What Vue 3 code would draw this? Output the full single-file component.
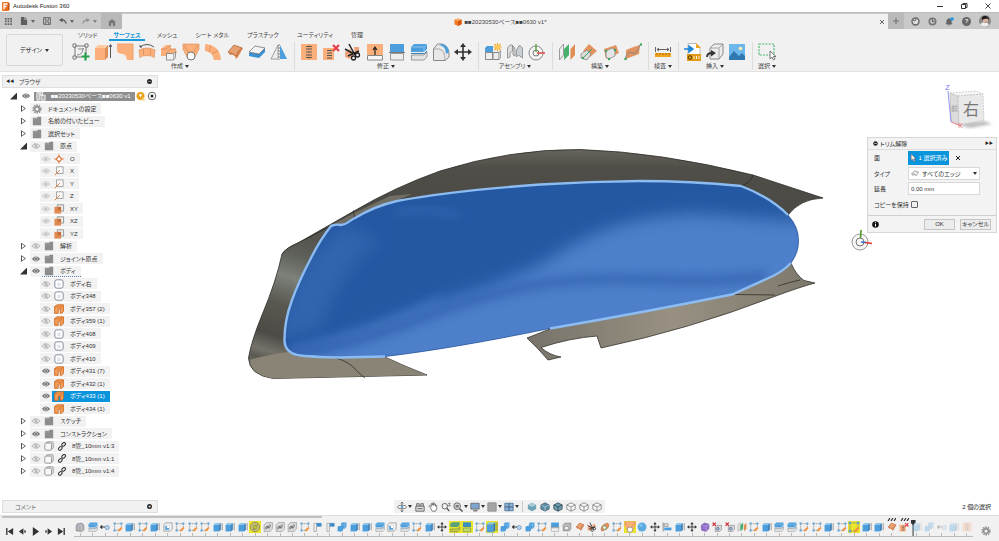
<script setup>
import { ref } from 'vue'

const tabs = ['ソリッド', 'サーフェス', 'メッシュ', 'シート メタル', 'プラスチック', 'ユーティリティ', '管理']
const activeTab = ref('サーフェス')

const groups = [
  { label: '作成', tools: ['sketch-new', 'extrude-o', 'patch-l', 'revolve', 'sweep', 'loft', 'arc', 'patch', 'slab', 'mirror'] },
  { label: '修正', tools: ['stitch', 'unstitch', 'trim', 'extend', 'half', 'split', 'fillet', 'move'] },
  { label: 'アセンブリ', tools: ['component', 'joint', 'origin'] },
  { label: '構築', tools: ['planes', 'plane-angle', 'plane-3pt', 'plane-path'] },
  { label: '検査', tools: ['measure'] },
  { label: '挿入', tools: ['svg-in', 'derive', 'canvas'] },
  { label: '選択', tools: ['select'] },
]

const root = ref(true)
const folder = (name, open, eye) => ({ depth: 1, name, open, eye, icon: 'folder' })
const leaf = (name, icon, eye, extra = {}) => ({ depth: 2, name, icon, eye, ...extra })
const rows = [
  { depth: 1, name: 'ドキュメントの設定', icon: 'gear' },
  folder('名前の付いたビュー'),
  folder('選択セット'),
  folder('原点', true, 'off'),
  leaf('O', 'point', 'dim'),
  leaf('X', 'axis', 'dim'),
  leaf('Y', 'axis', 'dim'),
  leaf('Z', 'axis', 'dim'),
  leaf('XY', 'plane', 'dim'),
  leaf('XZ', 'plane', 'dim'),
  leaf('YZ', 'plane', 'dim'),
  folder('解析', false, 'off'),
  folder('ジョイント原点', false, 'on'),
  { ...folder('ボディ', true, 'on'), dotted: true },
  leaf('ボディ右', 'body', 'off'),
  leaf('ボディ348', 'body', 'off'),
  leaf('ボディ357 (2)', 'surface', 'off'),
  leaf('ボディ359 (1)', 'surface', 'off'),
  leaf('ボディ408', 'body', 'off'),
  leaf('ボディ409', 'body', 'off'),
  leaf('ボディ410', 'body', 'off'),
  leaf('ボディ431 (7)', 'surface', 'on'),
  leaf('ボディ432 (1)', 'surface', 'on'),
  leaf('ボディ433 (1)', 'surface', 'on', { selected: true }),
  leaf('ボディ434 (1)', 'surface', 'on'),
  folder('スケッチ', false, 'off'),
  folder('コンストラクション', false, 'on'),
  { depth: 1, name: '8管_10mm v1:3', icon: 'comp', eye: 'off', link: true },
  { depth: 1, name: '8管_10mm v1:1', icon: 'comp', eye: 'off', link: true },
  { depth: 1, name: '8管_10mm v1:4', icon: 'comp', eye: 'off', link: true },
]

const nav = [
  ['orbit', 1], ['look'], ['hand'], ['zoomer'], ['fit', 1], ['display', 1], ['gridv', 1], ['views', 1],
]
const visual = ['cube-s', 'cube-e', 'cube-h', 'cube-w', 'cube-w', 'cube-w']

/* "!" marks a highlighted feature, "#" one that carries a pattern flag */
const steps = (
  'form split dot sketch extrude sketch extrude shell sketch sketch sketch extrude extrude extrude !ring chain chain chain ' +
  'sketch flag flag combine extrude extrude split shell split sketch extrude move !split-g !half-g sketch !extrude combine dot combine ' +
  'sketch half hollow patch trim disc sketch !loft sphere move align extrude move form-p del del planes sketch extrude split split ' +
  'sketch sketch extrude sketch !sketch extrude extrude #patch #unstitch extrude combine dot extrude stitch'
).split(' ').map((s, i) => ({
  icon: s.replace(/[!#]/, ''),
  hot: s[0] === '!',
  hash: s[0] === '#',
  later: i > 66,
  marker: i === 66,
}))

const extension = ref('0.00 mm')
const edgeType = ref('all')
const keepCopy = ref(false)
</script>

<template>
  <svg class="defs" width="0" height="0" aria-hidden="true">
    <defs>
      <!-- ribbon tools -->
      <symbol id="sketch-new" viewBox="0 0 18 18"><path d="M3 3h11v8M3 3v11h7" fill="none" stroke="#777"/><path d="M5 12Q11 12 11 5M6 6h6" fill="none" stroke="#888"/><g fill="#fff" stroke="#555" stroke-width=".8"><path d="M1 1h3v3H1zM13 1h3v3h-3zM1 13h3v3H1z"/></g><path d="M13.500 9.500v8M9.500 13.500h8" stroke="#22a04a" stroke-width="2.200"/></symbol>
      <symbol id="extrude-o" viewBox="0 0 18 18"><path d="M1 5l3-3h9l-3 3z" fill="#ffc9a0"/><path d="M1 5h10v12H1z" fill="#fbb07c"/><path d="M11 5l3-3v12l-3 3z" fill="#e08e56"/><path d="M16.500 15V2M15 4l1.500-2.500L18 4" fill="none" stroke="#444" stroke-width=".9"/></symbol>
      <symbol id="patch-l" viewBox="0 0 18 18"><path d="M1 1h16v16h-6q-1-6-4-6-5 0-6-3z" fill="#fbb07c"/><path d="M1 1h16v16" fill="none" stroke="#eda26c"/></symbol>
      <symbol id="revolve" viewBox="0 0 18 18"><path d="M1 7Q9 3 17 7l-1 8q-2-3-4-2-3-1-6 0-2-1-4 2z" fill="#fbb07c" stroke="#d98a55" stroke-width=".6"/><path d="M5.500 6v6M12.500 6v6" stroke="#d98a55" stroke-width=".7"/><path d="M2 4Q9-1 16 4M2 2v2h2" fill="none" stroke="#444" stroke-width=".9"/></symbol>
      <symbol id="sweep" viewBox="0 0 18 18"><path d="M1 6l5-4h5v4h5l1 4-10 1-1 2H1z" fill="#fbb07c"/><path d="M1 6h5l5-4M7 10l3-4h6" fill="none" stroke="#d98a55" stroke-width=".8"/><path d="M6.500 10.500h7v6.500h-7z" fill="#f3f3f3" stroke="#777" stroke-width=".8"/><path d="M13.500 10.500l2-2v6l-2 2.500" fill="#ddd" stroke="#777" stroke-width=".7"/></symbol>
      <symbol id="loft" viewBox="0 0 18 18"><path d="M1 1h16v5l-5 10H6L1 6z" fill="#fbb07c" stroke="#d98a55" stroke-width=".6"/><path d="M2 2l5 8M16 2l-5 8" stroke="#d98a55" stroke-width=".8"/><circle cx="9" cy="13" r="4" fill="#fff" stroke="#777"/></symbol>
      <symbol id="arc" viewBox="0 0 18 18"><path d="M1 1Q16 2 17 17h-7Q9 9 1 8z" fill="#fbb07c"/><path d="M7 2.500L5 9M14 7.500l-6 3.500" stroke="#d98a55" stroke-width=".8"/></symbol>
      <symbol id="patch" viewBox="0 0 18 18"><path d="M2 9l6-7 9 3-5 9-2 2Q9 11 4 12z" fill="#d98550"/><path d="M2 9l6-7 8 3q-4 2-6 8-3-3-8-4z" fill="#e9a070" stroke="#a85f30" stroke-width=".6"/></symbol>
      <symbol id="slab" viewBox="0 0 18 18"><path d="M1 10l6-6 10 1v4l-6 6-10-2z" fill="#3a90d0"/><path d="M1 9l6-6 10 2-6 6z" fill="#f4f4f4" stroke="#777" stroke-width=".8"/></symbol>
      <symbol id="mirror" viewBox="0 0 18 18"><path d="M8 2v14H1z" fill="#eee" stroke="#888" stroke-width=".8"/><path d="M10 2v14h7z" fill="#4c9fdc"/><path d="M9 1v16" stroke="#666" stroke-dasharray="2 1" stroke-width=".8"/></symbol>
      <symbol id="stitch" viewBox="0 0 18 18"><path d="M1 1h16v16H1z" fill="#fbb07c"/><path d="M9 1v16" stroke="#e09460"/><path d="M6 3.500h6M6 6h6M6 9h6M6 12h6M6 14.500h6" stroke="#555"/></symbol>
      <symbol id="unstitch" viewBox="0 0 18 18"><path d="M1 5h11v12H1z" fill="#fbb07c"/><path d="M5 7.500h5M5 10h5M5 12.500h5M5 15h5" stroke="#555"/><path d="M11 2l6 6M17 2l-6 6" stroke="#e8404c" stroke-width="2.200"/></symbol>
      <symbol id="trim" viewBox="0 0 18 18"><path d="M1 9l5-3 4 5-4 5-5-2zM10 4h5v6l-4 2z" fill="#eda27a"/><path d="M5 1l6 11M15 8L4 13M1 6l9 5" stroke="#222" stroke-width="1.500"/><circle cx="13.500" cy="12" r="2" fill="none" stroke="#222" stroke-width="1.300"/><circle cx="9.500" cy="15" r="2" fill="none" stroke="#222" stroke-width="1.300"/></symbol>
      <symbol id="extend" viewBox="0 0 18 18"><path d="M1 1h16v11H1z" fill="#fbb07c"/><path d="M1.500 12.500h15V17h-15z" fill="#f6f6f6" stroke="#888"/><path d="M9 12V5M7 7l2-3 2 3" fill="none" stroke="#222" stroke-width="1.200"/></symbol>
      <symbol id="half" viewBox="0 0 18 18"><path d="M2 1h14v8H2z" fill="#4c9fdc"/><path d="M2.500 10.500h13V17h-13z" fill="#eee" stroke="#999"/><path d="M1 9.500h16" stroke="#777"/></symbol>
      <symbol id="half-g" viewBox="0 0 18 18"><path d="M3 2h12v7H3z" fill="#3b8fc0"/><path d="M3.500 10.500h11V16h-11z" fill="#c3d970" stroke="#6f9a4a"/></symbol>
      <symbol id="split" viewBox="0 0 18 18"><path d="M1 4l3-3h13v5l-3 3H1z" fill="#4c9fdc"/><path d="M1 4h13l3-3M14 4v5" fill="none" stroke="#9cccf0" stroke-width=".8"/><path d="M1.500 12h12.500l3-3v5l-3 3H1.500z" fill="#e4e4e4" stroke="#888" stroke-width=".8"/><path d="M1 10.500h13.500L17 8" fill="none" stroke="#3b7fb5"/></symbol>
      <symbol id="split-g" viewBox="0 0 18 18"><path d="M2 4l3-2h11v4l-3 3H2z" fill="#5aa07a"/><path d="M2.500 12H13l3-3v4l-3 3H2.500z" fill="#c9cf50" stroke="#72803a"/></symbol>
      <symbol id="fillet" viewBox="0 0 18 18"><path d="M1.500 6l4-5H10q7 2 7 10v3l-4 3.500H1.500z" fill="#e8e8e8" stroke="#888"/><path d="M7 2q7 1 7 9l3-2q-1-7-7-8z" fill="#4c9fdc"/><path d="M1.500 6H7q6 1 6 11" fill="none" stroke="#999" stroke-width=".8"/></symbol>
      <symbol id="move" viewBox="0 0 18 18"><path d="M9 2v14M2 9h14" stroke="#333" stroke-width="1.600"/><path d="M9 0l3 4H6zM9 18l3-4H6zM0 9l4-3v6zM18 9l-4-3v6z" fill="#333"/></symbol>
      <symbol id="component" viewBox="0 0 18 18"><path d="M1 5l2-2h6v6H1z" fill="#4c9fdc"/><path d="M1.500 9.500h7v7h-7zM9 9.500h6v7H9z" fill="#eee" stroke="#888"/><path d="M15 9.500l1.500-2v7L15 16.500" fill="#ccc" stroke="#888" stroke-width=".7"/><path d="M13.500 0v8M9.500 4h8M10.500 1l6 6M16.500 1l-6 6" stroke="#f5a623" stroke-width="1.200"/><circle cx="13.500" cy="4" r="2.200" fill="#ffc857"/></symbol>
      <symbol id="joint" viewBox="0 0 18 18"><path d="M1.500 15V5q2-4 5-3v6L4 10v4zM7 3q2 1 2 4v6l-2-1z" fill="#ddd" stroke="#888" stroke-width=".8"/><path d="M16.500 15V5l-3-3-3 5v7l2-2z" fill="#c9ced2" stroke="#888" stroke-width=".8"/></symbol>
      <symbol id="origin" viewBox="0 0 18 18"><circle cx="8" cy="10" r="7" fill="#f5f5f5" stroke="#888"/><circle cx="8" cy="10" r="3" fill="none" stroke="#777"/><path d="M8 9V1" stroke="#55a83a" stroke-width="1.400"/><path d="M9 10h8" stroke="#e0413a" stroke-width="1.400"/></symbol>
      <symbol id="planes" viewBox="0 0 18 18"><path d="M1.500 6l4-5v11l-4 5z" fill="#eee" stroke="#888" stroke-width=".8"/><path d="M6 6l5-5v11l-5 5z" fill="#46b06c"/><path d="M12.500 6L17 1v11l-4.500 5z" fill="#e08e56"/></symbol>
      <symbol id="plane-angle" viewBox="0 0 18 18"><path d="M9 1l8 7-7 6-7-6z" fill="#e3935f"/><path d="M1 11l6-4 4 4-4 6-6-2z" fill="#ddd" stroke="#888" stroke-width=".8"/><path d="M3 15L12 6" stroke="#3aa35c"/><circle cx="3" cy="15" r="1.200" fill="#3aa35c"/></symbol>
      <symbol id="plane-3pt" viewBox="0 0 18 18"><path d="M2 6l12-4 3 8-13 6z" fill="#e3935f"/><path d="M4 8l6-3 3 2v6l-6 3-3-2z" fill="#e4e4e4" stroke="#888" stroke-width=".8"/><g fill="#3aa35c"><circle cx="4" cy="8" r="1.200"/><circle cx="13" cy="7" r="1.200"/><circle cx="7" cy="16" r="1.200"/></g></symbol>
      <symbol id="plane-path" viewBox="0 0 18 18"><path d="M2 7Q8 4 16 2l-1 9q-6 2-13 5z" fill="#e3935f"/><path d="M1 16q3-9 7-6t8-8" fill="none" stroke="#888"/><circle cx="17" cy="1.500" r="1.200" fill="#3aa35c"/><circle cx="1.500" cy="16" r="1.200" fill="#3aa35c"/></symbol>
      <symbol id="measure" viewBox="0 0 18 18"><path d="M1 10h16v4H1z" fill="#f0a31c"/><path d="M3 10v2M6 10v2M9 10v2M12 10v2M15 10v2" stroke="#8a5a00" stroke-width=".7"/><path d="M1.500 4v5M16.500 4v5M3 6.500h12M5 5L3 6.500 5 8M13 5l2 1.500L13 8" fill="none" stroke="#555" stroke-width=".9"/></symbol>
      <symbol id="svg-in" viewBox="0 0 18 18"><path d="M4 .5h8l4 4V12H4z" fill="#fff" stroke="#bbb"/><path d="M12 0l5 5h-5z" fill="#f0a31c"/><path d="M3 11h14v7H3z" fill="#e09a18"/><circle cx="6" cy="14.500" r="1.800" fill="none" stroke="#553800"/><path d="M10 13v3M12.500 13v3M15 13v3" stroke="#fff3d8"/><path d="M0 6h7M5 3l4 3-4 3z" stroke="#1a86d8" stroke-width="1.500" fill="#1a86d8"/></symbol>
      <symbol id="derive" viewBox="0 0 18 18"><path d="M4 5l4-4h9v10l-4 5H4z" fill="#ececec" stroke="#888"/><path d="M4 5h9l4-4M13 5v11" fill="none" stroke="#999" stroke-width=".8"/><path d="M1 14q0-4 5-4" fill="none" stroke="#333" stroke-width="1.800"/><path d="M5 7l5 3-5 3.500z" fill="#333"/></symbol>
      <symbol id="canvas" viewBox="0 0 18 18"><path d="M1 1h16v16H1z" fill="#6db7ec"/><circle cx="12.500" cy="5.500" r="1.800" fill="#fff0b0"/><path d="M1 14l5-6 5 5 3-3 3 3v4H1z" fill="#2f79b0"/></symbol>
      <symbol id="select" viewBox="0 0 18 18"><path d="M1 1h15v11H1z" fill="none" stroke="#4bb574" stroke-width="1.200" stroke-dasharray="2 1.200"/><path d="M12 8v8l2-2 1.500 3 1.500-1-1.500-2.500H18z" fill="#fff" stroke="#555" stroke-width=".8"/></symbol>

      <!-- timeline features -->
      <symbol id="sketch" viewBox="0 0 18 18"><path d="M3 3h12v7M3 3v12h7" fill="none" stroke="#888" stroke-width="1.300" stroke-dasharray="3 1"/><g fill="#5aa5dc"><path d="M1 1h3.500v3.500H1zM13.500 1H17v3.500h-3.500zM1 13.500h3.500V17H1z"/></g><path d="M9 17l1-4 5-4 2 2-4 5z" fill="#f0923c"/></symbol>
      <symbol id="extrude" viewBox="0 0 18 18"><path d="M1 5l3-3h10l-3 3z" fill="#8cc6ee"/><path d="M1 5h10v12H1z" fill="#4c9fdc"/><path d="M11 5l3-3v12l-3 3z" fill="#2f78b4"/><path d="M16.500 15V2" stroke="#555"/></symbol>
      <symbol id="form" viewBox="0 0 18 18"><path d="M2 16V7q1-5 7-5t7 5v7l-3 3z" fill="#aeb2b8" stroke="#777"/><path d="M12 16V8q-1-4-5-5" stroke="#d8dade" fill="none"/></symbol>
      <symbol id="form-p" viewBox="0 0 18 18"><path d="M2 6l6-4 8 2v8l-5 5-8-2z" fill="#9270c8" stroke="#6a48a5"/><path d="M3 6l8 2 5-4M11 8v8" stroke="#c5b0e8" fill="none"/></symbol>
      <symbol id="dot" viewBox="0 0 18 18"><path d="M0 9h9M4 6L1 9l3 3" stroke="#333" stroke-width="2" fill="none"/><circle cx="13" cy="10" r="3.800" fill="#b9d2ee" stroke="#4a78ad"/></symbol>
      <symbol id="shell" viewBox="0 0 18 18"><path d="M1.500 5l3-3.500h12V13l-3.500 3.500H1.500z" fill="#eee" stroke="#777"/><path d="M4 7h7v7H4z" fill="#4c9fdc"/><path d="M7 7h4v4H7z" fill="#fff"/></symbol>
      <symbol id="ring" viewBox="0 0 18 18"><circle cx="9" cy="9" r="5" fill="none" stroke="#c8c27a" stroke-width="4"/><path d="M8 10l5-5M6 13l3-1" stroke="#555"/><circle cx="9" cy="9" r="7" fill="none" stroke="#77744a"/><circle cx="9" cy="9" r="3" fill="none" stroke="#77744a"/></symbol>
      <symbol id="chain" viewBox="0 0 18 18"><path d="M2 5l4-4h11v11l-4 5H2z" fill="#ddd" stroke="#888"/><path d="M5 13V9l3-2v4zM10 11V7l3-2v4zM6 9l6 2" fill="none" stroke="#666" stroke-width="1.300"/></symbol>
      <symbol id="flag" viewBox="0 0 18 18"><path d="M3.500 17V2.500H16v5H8V17z" fill="#eee" stroke="#888"/><path d="M8 2h9v6H8z" fill="#3b8ccc"/></symbol>
      <symbol id="combine" viewBox="0 0 18 18"><path d="M1 9l2-2h4V3l2-2h8v8l-3 3h-3v3l-2 2H1z" fill="#4c9fdc"/><path d="M7 5h7l3-4M14 5v7" stroke="#9cccf0" fill="none"/></symbol>
      <symbol id="hollow" viewBox="0 0 18 18"><path d="M2 5l3-3h11v11l-3 3H2z" fill="#b8bcc0" stroke="#777"/><path d="M5 8h6v6H5z" fill="#fff" stroke="#777"/></symbol>
      <symbol id="disc" viewBox="0 0 18 18"><path d="M2 15Q1 5 14 2l2 3q0 8-12 11z" fill="#e3935f" stroke="#a85f30"/><circle cx="8" cy="10" r="3" fill="#fff" stroke="#3aa35c"/></symbol>
      <symbol id="sphere" viewBox="0 0 18 18"><circle cx="9" cy="9" r="8" fill="#5aabe2"/><circle cx="7" cy="6" r="3" fill="#80c2ee"/></symbol>
      <symbol id="align" viewBox="0 0 18 18"><path d="M2 1v16" stroke="#777" stroke-width="1.500"/><path d="M4 3h7v5H4z" fill="#ddd" stroke="#777"/><path d="M4 10h13v5H4z" fill="#4c9fdc"/></symbol>
      <symbol id="del" viewBox="0 0 18 18"><path d="M1 1l6 6M7 1L1 7" stroke="#d02030" stroke-width="2"/><path d="M6 9l3-3h8v8l-3 3H6z" fill="#ddd" stroke="#777"/><circle cx="10.500" cy="12" r="2.500" fill="#8ec0e8" stroke="#446"/></symbol>
      <symbol id="hash" viewBox="0 0 9 3"><path d="M1 3l2-3M4 3l2-3M7 3l2-3" stroke="#222" stroke-width="1.100"/></symbol>

      <!-- browser -->
      <symbol id="eye-on" viewBox="0 0 12 8"><path d="M.5 4Q6-2.500 11.500 4 6 10.500.5 4z" fill="#777"/><circle cx="6" cy="4" r="2.300" fill="#ddd"/><circle cx="6" cy="4" r="1.200" fill="#555"/></symbol>
      <symbol id="eye-off" viewBox="0 0 12 8"><path d="M.5 4Q6-2 11.500 4 6 10 .5 4z" fill="none" stroke="#a5a5a5"/><circle cx="6" cy="4" r="1.600" fill="none" stroke="#a5a5a5"/><path d="M4 .5l4 7" stroke="#a5a5a5"/></symbol>
      <symbol id="eye-dim" viewBox="0 0 12 8"><path d="M.5 4Q6-2 11.500 4 6 10 .5 4z" fill="#ddd" stroke="#cfcfcf"/><circle cx="6" cy="4" r="1.500" fill="#bbb"/></symbol>
      <symbol id="folder" viewBox="0 0 12 12"><path d="M1 2h5l1-1h4v10H1z" fill="#8c8c8c"/><path d="M1 3.500h6" stroke="#b5b5b5" stroke-width=".6"/></symbol>
      <symbol id="gear" viewBox="0 0 12 12"><circle cx="6" cy="6" r="4.600" fill="none" stroke="#8a8a8a" stroke-width="1.800" stroke-dasharray="1.800 1.100"/><circle cx="6" cy="6" r="2.800" fill="none" stroke="#8a8a8a" stroke-width="1.700"/></symbol>
      <symbol id="point" viewBox="0 0 12 12"><path d="M6 0v12M0 6h12" stroke="#e8915a"/><path d="M6 2.500L9.500 6 6 9.500 2.500 6z" fill="#fff" stroke="#e07a3c" stroke-width="1.500"/></symbol>
      <symbol id="axis" viewBox="0 0 12 12"><path d="M3 1h8v8H3z" fill="#fafafa" stroke="#999"/><path d="M1 11l6-6" stroke="#e07a3c" stroke-width="1.200"/></symbol>
      <symbol id="plane" viewBox="0 0 12 12"><path d="M4 1h7.500v7.500H4z" fill="#eee" stroke="#888"/><path d="M.5 3.500h8v8h-8z" fill="#e08a52"/><path d="M4.500 3.500h4v4h-4z" fill="#c56d38"/></symbol>
      <symbol id="body" viewBox="0 0 12 12"><rect x="1" y="1" width="10" height="10" rx="2.500" fill="#fff" stroke="#7d8696" stroke-width="1.100"/><path d="M4 4.500h4v4H4z" fill="#dfe2ea"/></symbol>
      <symbol id="surface" viewBox="0 0 12 12"><path d="M.8 3l3-2h7.500v8l-2 2.200H7.500V6H5v5.200H.8z" fill="#f4a05c" stroke="#d06a20" stroke-width="1.100"/><path d="M.8 3.500h7.700l2.800-2M8.500 3.500V6" fill="none" stroke="#d06a20" stroke-width=".8"/></symbol>
      <symbol id="comp" viewBox="0 0 12 12"><rect x="1" y="2.500" width="8" height="8.500" rx="1.500" fill="#f8f8f8" stroke="#888"/><path d="M3 2.500l1-1.500h6q1 0 1 1v6l-2 2" fill="none" stroke="#888"/></symbol>
      <symbol id="link" viewBox="0 0 12 12"><rect x="5.500" y="1.500" width="5.500" height="3.600" rx="1.800" transform="rotate(-45 8 3.300)" fill="none" stroke="#333" stroke-width="1.400"/><rect x="1" y="6.700" width="5.500" height="3.600" rx="1.800" transform="rotate(-45 3.800 8.500)" fill="none" stroke="#333" stroke-width="1.400"/></symbol>
      <symbol id="root-ic" viewBox="0 0 12 12"><path d="M1 2h3v9H1zM5 1h3v4H5zM6 5h5v6H6z" fill="#b5b5b5" stroke="#fff" stroke-width=".9"/></symbol>

      <!-- navigation -->
      <symbol id="orbit" viewBox="0 0 12 12"><ellipse cx="6" cy="6" rx="5.500" ry="2.200" fill="none" stroke="#555" stroke-width=".8"/><path d="M6 0v12M4.500 2L6 0l1.500 2M4.500 10L6 12l1.500-2" fill="none" stroke="#555" stroke-width=".8"/><circle cx="6" cy="6" r="1.500" fill="#5aa5dc"/></symbol>
      <symbol id="look" viewBox="0 0 12 12"><path d="M1 5h10v6H1zM2 5V2h3v3M7 5V2h3v3" fill="#ddd" stroke="#555"/><path d="M3 8h6" stroke="#555"/></symbol>
      <symbol id="hand" viewBox="0 0 12 12"><path d="M3 7L1 5l1-1 2 1.500V2l1-.5L6 4V1h1v3l1-2 1 .5V5l1.500-1v4L9 11H5z" fill="#fff" stroke="#444" stroke-width=".8"/></symbol>
      <symbol id="zoomer" viewBox="0 0 12 12"><circle cx="4.500" cy="5" r="3.300" fill="none" stroke="#555"/><path d="M7 7.500l3 3.500" stroke="#555" stroke-width="1.600"/><path d="M10 1v4M8.500 2.500L10 1l1.500 1.500M8 4.500h4" fill="none" stroke="#555" stroke-width=".7"/></symbol>
      <symbol id="fit" viewBox="0 0 12 12"><circle cx="5" cy="5" r="4" fill="#ddd" stroke="#555"/><path d="M3 3.500h4v3H3z" fill="#777"/><path d="M8 8l3.500 3.500" stroke="#555" stroke-width="1.800"/></symbol>
      <symbol id="display" viewBox="0 0 12 12"><path d="M1 1.500h10v7H1z" fill="#7fa6cf" stroke="#666"/><path d="M4 10.500h5" stroke="#666" stroke-width="1.500"/></symbol>
      <symbol id="gridv" viewBox="0 0 12 12"><path d="M1 1h10v10H1z" fill="#a5a5a5" stroke="#8a8a8a"/></symbol>
      <symbol id="views" viewBox="0 0 12 12"><path d="M1 1.500h10v9H1z" fill="#8fb3d8" stroke="#4a6f98"/><path d="M6 1.500v9M1 6h10" stroke="#34557a"/></symbol>
      <symbol id="cube-s" viewBox="0 0 12 12"><path d="M6 1l5 2.500v5L6 11 1 8.500v-5z" fill="#6fa3b8"/><path d="M1 3.500L6 6l5-2.500L6 1z" fill="#a9ccd9"/></symbol>
      <symbol id="cube-e" viewBox="0 0 12 12"><path d="M6 1l5 2.500v5L6 11 1 8.500v-5z" fill="#5b8ea3" stroke="#345" stroke-width=".7"/><path d="M1 3.500L6 6l5-2.500M6 6v5" fill="none" stroke="#cde" stroke-width=".7"/></symbol>
      <symbol id="cube-h" viewBox="0 0 12 12"><path d="M6 1l5 2.500v5L6 11 1 8.500v-5z" fill="#6f9fae" stroke="#234" stroke-width=".8"/><path d="M1 3.500L6 6l5-2.500M6 6v5" fill="none" stroke="#234" stroke-width=".8"/></symbol>
      <symbol id="cube-w" viewBox="0 0 12 12"><path d="M6 1l5 2.500v5L6 11 1 8.500v-5zM1 3.500L6 6l5-2.500M6 6v5" fill="#fafafa" stroke="#666" stroke-width=".8"/></symbol>
    </defs>
  </svg>

  <div class="app">
    <header class="titlebar">
      <svg class="logo" viewBox="0 0 8 9"><rect width="7" height="9" rx="1" fill="#f0701c"/><path d="M2 7.500V2h3.500M2 4.500h2.500" fill="none" stroke="#fff" stroke-width="1.300"/><path d="M7 1v7" stroke="#a33f08"/></svg>
      <span class="app-name">Autodesk Fusion 360</span>
      <div class="window-buttons">
        <button aria-label="最小化"><svg viewBox="0 0 8 8"><path d="M1 4.500h6" stroke="#333"/></svg></button>
        <button aria-label="元に戻す"><svg viewBox="0 0 8 8"><path d="M1.500 2.500h4v4h-4zM3 2.500v-1h4v4H5.500" fill="none" stroke="#333"/></svg></button>
        <button aria-label="閉じる"><svg viewBox="0 0 8 8"><path d="M1.500 1.500l5 5M6.500 1.500l-5 5" stroke="#333" stroke-width=".9"/></svg></button>
      </div>
    </header>

    <div class="docbar">
      <div class="quick">
        <button aria-label="データ パネル"><svg viewBox="0 0 9 9"><g fill="#666"><path d="M1 1h2v2H1zM4 1h2v2H4zM7 1h2v2H7zM1 4h2v2H1zM4 4h2v2H4zM7 4h2v2H7zM1 7h2v2H1zM4 7h2v2H4zM7 7h2v2H7z"/></g></svg></button>
        <button class="wide" aria-label="ファイル"><svg viewBox="0 0 9 9"><path d="M1 0h4v3h3v6H1z" fill="#5e5e5e"/><path d="M5.500 0L8 2.500H5.500z" fill="#777"/></svg><i class="caret"></i></button>
        <button aria-label="保存"><svg viewBox="0 0 9 9"><path d="M.7.700h7.600v7.600H.7zM2.500 1v2.500h4V1M2.500 8V5.500h4V8" fill="none" stroke="#666" stroke-width="1.100"/></svg></button>
        <button class="wide" aria-label="取り消し"><svg viewBox="0 0 9 9"><path d="M2 3.500Q7 2.500 8 7.500" fill="none" stroke="#555" stroke-width="1.400"/><path d="M0 3.500L4 1v5z" fill="#555"/></svg><i class="caret"></i></button>
        <button class="wide pale" aria-label="やり直し"><svg viewBox="0 0 9 9"><path d="M7 3.500Q2 2.500 1 7.500" fill="none" stroke="#777" stroke-width="1.200"/><path d="M9 3.500L5 1v5z" fill="#777"/></svg><i class="caret"></i></button>
      </div>
      <button class="home" aria-label="ホーム"><svg viewBox="0 0 9 9"><path d="M4.500 1L9 5H8v4H5.500V6h-2v3H1V5H0z" fill="#777"/></svg></button>
      <div class="doc-tab">
        <span class="doc-title">
          <svg viewBox="0 0 9 9"><path d="M4.500.5L8.500 2v5l-4 2-4-2V2z" fill="#f07a28"/><path d="M.5 2l4 1.500 4-1.500-4-1.500z" fill="#ffb070"/><path d="M4.500 3.500V9l4-2V2z" fill="#d8580f"/></svg>
          ■■20230530ベース■■0630 v1*
        </span>
        <button aria-label="タブを閉じる"><svg viewBox="0 0 8 8"><path d="M2 2l4 4M6 2L2 6" stroke="#555" stroke-width=".9"/></svg></button>
      </div>
      <button class="new-tab" aria-label="新規タブ"><svg viewBox="0 0 8 8"><path d="M4 1v6M1 4h6" stroke="#777" stroke-width="1.200"/></svg></button>
      <div class="account">
        <button aria-label="拡張機能"><svg viewBox="0 0 9 9"><circle cx="4.500" cy="4.500" r="3.500" fill="#ddd" stroke="#666" stroke-width="1.400"/><path d="M2 3l2 1 1-2" stroke="#666" fill="none"/></svg></button>
        <button aria-label="ジョブ"><svg viewBox="0 0 9 9"><circle cx="4.500" cy="4.500" r="4" fill="#777"/><circle cx="4.500" cy="4.500" r="2.300" fill="#ccc"/><path d="M4.500 2.500v2.200h2" stroke="#555" fill="none"/></svg></button>
        <button aria-label="通知"><svg viewBox="0 0 9 9"><path d="M1 7q1-1 1-4 2-3 4 0 0 3 1 4zM3 8h2" fill="#666" stroke="#666" stroke-width=".8"/><circle cx="7" cy="2" r="1.800" fill="#1c97dc"/></svg></button>
        <button aria-label="ヘルプ" class="help">?</button>
        <button aria-label="プロファイル"><svg class="avatar" viewBox="0 0 12 12"><circle cx="6" cy="6" r="6" fill="#8b8988"/><path d="M1 10q2-4 5-2 3-1 4 2-4 3.500-9 0z" fill="#ececec"/><circle cx="6.500" cy="5" r="2.600" fill="#d6b29e"/><path d="M3 5q-1-4 3-4t4 4L8.500 3.500 5 4z" fill="#1e1a1a"/></svg></button>
      </div>
    </div>

    <section class="ribbon">
      <button class="workspace">デザイン <i class="caret"></i></button>
      <div class="ribbon-body">
        <nav class="tabs">
          <button v-for="t in tabs" :key="t" :class="{ active: t === activeTab }" @click="activeTab = t">{{ t }}</button>
        </nav>
        <div class="groups">
          <div v-for="g in groups" :key="g.label" class="group">
            <div class="tools">
              <button v-for="t in g.tools" :key="t" :aria-label="g.label + ' ' + t"><svg><use :href="'#' + t" /></svg></button>
            </div>
            <button class="group-label">{{ g.label }}<i class="caret"></i></button>
          </div>
        </div>
      </div>
    </section>

    <main class="stage">
      <svg class="model" viewBox="0 72 999 443" preserveAspectRatio="xMidYMid meet">
        <defs>
          <linearGradient id="hood" x1="0" y1="0" x2="0" y2="1"><stop offset="0" stop-color="#66635b" /><stop offset=".14" stop-color="#504e48" /><stop offset="1" stop-color="#44423d" /></linearGradient>
          <linearGradient id="cheek" x1="300" y1="235" x2="258" y2="372" gradientUnits="userSpaceOnUse"><stop offset="0" stop-color="#55544e" /><stop offset=".14" stop-color="#5e605a" /><stop offset=".3" stop-color="#7c817a" /><stop offset=".5" stop-color="#595850" /><stop offset=".72" stop-color="#4c4b46" /><stop offset=".84" stop-color="#74726a" /><stop offset=".9" stop-color="#5a584f" /><stop offset="1" stop-color="#8a8476" /></linearGradient>
          <linearGradient id="sill" x1="0" y1="0" x2="1" y2="0"><stop offset="0" stop-color="#77736a" /><stop offset=".5" stop-color="#989182" /><stop offset="1" stop-color="#7d786c" /></linearGradient>
          <filter id="soft" x="-20%" y="-40%" width="140%" height="180%"><feGaussianBlur stdDeviation="8" /></filter>
          <filter id="softer" x="-20%" y="-80%" width="140%" height="260%"><feGaussianBlur stdDeviation="4" /></filter>
          <path id="face" d="M331 226q6-2 10-1c6 0 7-4 14-7Q375 206 397 201 450 191 540 184.500 590 181.500 640 181q50 0 101 5Q770 197 788 215 799 227 798.500 241 799 252 791 263 783 271 773 276L732 294.500Q640 313 550 328.500 450 349 385 356.500L340 357.500Q310 357 297 355 285 352 284.500 341 284 322 292 300 299 281 311 258 320 240 331 226z" />
          <clipPath id="face-clip"><use href="#face" /></clipPath>
        </defs>

        <path d="M282 254Q286 248 298 243L354 211Q395 187 440 171 510 149 580 149.500 660 152 753 175L823 198Q800 199 788 215L741 200H500L400 235 340 240 300 280z" fill="url(#hood)" stroke="#2e2c28" stroke-width=".8" />
        <path d="M282 254Q286 248 298 243L331 226 343 228 300 290 292 350 385 357Q404 366 427 375L273 378.500Q249 375 248.500 358 251 342 262 315 276 282 282 254z" fill="url(#cheek)" stroke="#2e2c28" stroke-width=".8" />
        <path d="M250 360Q266 355 288 352L297 357H385Q404 366 427 375L273 378.500Q251 374 250 360z" fill="#8a8476" />
        <path d="M306 239L354 213 390 196 412 194 397 200 355 217 342 224 330 226z" fill="#8a877c" opacity=".6" />
        <path d="M550 329L732 294 773 276 791 263Q796 275 804 280.500L815 283Q800 287 773 297 690 329 601 348L597 336Q570 338 541 347.500 549 355 561 357L548 360Q539 349 527 338z" fill="url(#sill)" stroke="#34322d" stroke-width=".8" />
        <path d="M353.500 210.500l1 7M336 358Q350 362 357 371 361 375 365 378M753 175Q751 183 741 186M735 294.500l40 .5M778 286Q790 282 800 280" fill="none" stroke="#25231f" stroke-width=".7" />

        <g clip-path="url(#face-clip)">
          <use href="#face" fill="#2558a3" />
          <path d="M280 340Q285 270 345 225L380 240Q340 270 320 330z" fill="#3c70ba" opacity=".55" filter="url(#soft)" />
          <path d="M395 213Q420 206 460 216" fill="none" stroke="#3b6fb9" stroke-width="7" opacity=".5" filter="url(#softer)" />
          <path d="M280 362Q370 330 430 305 520 280 560 252 620 214 700 214L810 222V370H280z" fill="#4d7fca" filter="url(#soft)" />
          <path d="M290 354C390 340 430 307 520 288S680 288 765 276" fill="none" stroke="#3665b1" stroke-width="11" opacity=".75" filter="url(#softer)" />
          <path d="M290 349Q390 325 440 298" fill="none" stroke="#4877c2" stroke-width="5" opacity=".6" filter="url(#softer)" />
        </g>
        <use href="#face" fill="none" stroke="#2b559a" stroke-width=".7" />
        <path d="M385 356.500L340 357.500Q310 357 297 355 285 352 284.500 341 284 322 292 300 299 281 311 258 320 240 331 226q6-2 10-1c6 0 7-4 14-7Q375 206 397 201 450 191 540 184.500 590 181.500 640 181q50 0 101 5Q770 197 788 215M791 263Q783 271 773 276L732 294.500Q640 313 550 328.500" fill="none" stroke="#8dbcf2" stroke-width="2.400" />

        <g fill="none" stroke="#999"><circle cx="860" cy="242" r="8" fill="#f7f7f7" /><circle cx="860" cy="242" r="4" stroke="#777" /></g>
        <path d="M860.500 238l.5-8" stroke="#4f9a2e" stroke-width="1.600" />
        <path d="M861 242l5 .5" stroke="#2d6fd0" stroke-width="1.600" />
        <path d="M865 242.500l7 1" stroke="#e0372e" stroke-width="1.600" />
      </svg>

      <aside class="browser">
        <div class="panel-head"><span class="rewind">◀◀</span> ブラウザ <button class="dotbtn" aria-label="パネルを最小化">–</button></div>
        <ul class="tree">
          <li class="row root">
            <button class="twist" :class="{ open: root }" aria-label="展開" @click="root = !root"></button>
            <span class="box plain"><svg class="eye"><use href="#eye-on" /></svg></span>
            <span class="name root-name"><svg class="ic"><use href="#root-ic" /></svg><span>■■20230530ベース■■0630 v1</span></span>
            <svg class="badge" viewBox="0 0 10 10"><circle cx="4.500" cy="5" r="4" fill="#eaa21e" /><path d="M4.500 3v3M3 4h3" stroke="#fff" /><path d="M7 6l2.500 3.500H5z" fill="#f8d27c" /></svg>
            <svg class="badge" viewBox="0 0 10 10"><circle cx="5" cy="5" r="3.800" fill="#fff" stroke="#555" stroke-width=".9" /><circle cx="5" cy="5" r="1.500" fill="#222" /></svg>
          </li>
          <li v-for="r in rows" :key="r.name" class="row" :class="'d' + r.depth">
            <button v-if="r.depth === 1" class="twist" :class="{ open: r.open }" aria-label="展開"></button>
            <span class="box">
              <svg v-if="r.eye" class="eye"><use :href="'#eye-' + r.eye" /></svg>
              <span class="name" :class="{ selected: r.selected, dotted: r.dotted }">
                <svg class="ic"><use :href="'#' + r.icon" /></svg>
                <svg v-if="r.link" class="lk"><use href="#link" /></svg>
                <span class="txt">{{ r.name }}</span>
              </span>
            </span>
          </li>
        </ul>
      </aside>

      <div class="right">
        <svg class="viewcube" viewBox="0 0 54 48">
          <defs><filter id="shade"><feGaussianBlur stdDeviation="1.500" /></filter></defs>
          <path d="M16 42L44 39 52 42 30 46z" fill="#bbb" filter="url(#shade)" />
          <path d="M10 11L18 14 19 43 11 39z" fill="#dcdcdc" stroke="#aaa" stroke-width=".5" />
          <path d="M10 11L36 9 43 12 18 14z" fill="#f6f6f6" stroke="#aaa" stroke-width=".5" stroke-dasharray="2 1" />
          <path d="M18 14L43 12 44 38 19 43z" fill="#e9e9e9" stroke="#aaa" stroke-width=".5" stroke-dasharray="2 1" />
          <path d="M11 40L8 9" stroke="#8a8af0" stroke-width=".9" />
          <path d="M11 40L21 44" stroke="#f08080" stroke-width=".9" />
          <text x="5" y="8" class="axz">Z</text><text x="18" y="46" class="axx">X</text>
          <text x="23" y="33" class="face-r">右</text><text x="11" y="29" class="face-f">前</text>
        </svg>
        <form class="dialog" @submit.prevent>
          <header><svg viewBox="0 0 6 6"><circle cx="3" cy="3" r="2.700" fill="#222" /><path d="M1.500 3h3" stroke="#fff" stroke-width=".8" /></svg>トリム解除<span class="ff">▶▶</span></header>
          <div class="fields">
            <label for="face-sel">面</label>
            <div class="sel"><button id="face-sel" type="button" class="pick"><svg viewBox="0 0 6 9"><path d="M1 0v7l1.500-1.500L4 8.500l1-.5-1.200-2.700H6z" fill="#fff" stroke="#a05030" stroke-width=".5" /></svg>1 選択済み</button><button type="button" class="clear" aria-label="選択を解除"><svg viewBox="0 0 6 6"><path d="M1 1l4 4M5 1L1 5" stroke="#222" /></svg></button></div>
            <label for="edge">タイプ</label>
            <div class="drop"><svg viewBox="0 0 9 7"><path d="M.5 4L4 .5 8.500 2 6 6 4 4.500z" fill="#eee" stroke="#777" stroke-width=".7" /><path d="M2 6l2-2" stroke="#777" /></svg><select id="edge" v-model="edgeType"><option value="all">すべてのエッジ</option></select><i class="caret"></i></div>
            <label for="ext">延長</label>
            <input id="ext" v-model="extension" type="text" />
            <label for="keep">コピーを保持</label>
            <input id="keep" v-model="keepCopy" type="checkbox" />
          </div>
          <footer><svg viewBox="0 0 7 7"><circle cx="3.500" cy="3.500" r="3.300" fill="#111" /><path d="M3.500 3v2.500M3.500 1.300v1" stroke="#fff" /></svg><button type="submit">OK</button><button type="button">キャンセル</button></footer>
        </form>
      </div>

      <div class="bottom">
        <div class="panel-head comment">コメント <button class="dotbtn" aria-label="コメントを追加">+</button></div>
        <div class="navbar">
          <button v-for="n in nav" :key="n[0]" :aria-label="n[0]" :class="{ wide: n[1] }"><svg><use :href="'#' + n[0]" /></svg><i v-if="n[1]" class="caret"></i></button>
          <span class="sep"></span>
          <button v-for="(v, i) in visual" :key="i" :aria-label="'表示スタイル ' + (i + 1)"><svg><use :href="'#' + v" /></svg></button>
        </div>
        <span class="status">2 個の選択</span>
      </div>
    </main>

    <footer class="timeline">
      <div class="scroll"></div>
      <div class="track">
        <div class="play">
          <button aria-label="先頭"><svg viewBox="0 0 10 10"><path d="M2 1v8" stroke="#333" stroke-width="1.500" /><path d="M9 1v8L3 5z" fill="#333" /></svg></button>
          <button aria-label="前へ"><svg viewBox="0 0 10 10"><path d="M6 1.500v7L1 5zM7 3.500h1.500v3H7z" fill="#333" /></svg></button>
          <button aria-label="再生"><svg viewBox="0 0 10 10"><path d="M2 0l7 5-7 5z" fill="#333" /></svg></button>
          <button aria-label="次へ"><svg viewBox="0 0 10 10"><path d="M4 1.500v7L9 5zM1.500 3.500H3v3H1.500z" fill="#333" /></svg></button>
          <button aria-label="末尾"><svg viewBox="0 0 10 10"><path d="M8 1v8" stroke="#333" stroke-width="1.500" /><path d="M1 1v8l6-4z" fill="#333" /></svg></button>
        </div>
        <ol class="steps">
          <li v-for="(s, i) in steps" :key="i" :class="{ hot: s.hot, later: s.later, marker: s.marker }">
            <svg class="step"><use :href="'#' + s.icon" /></svg>
            <svg v-if="s.hash" class="hash"><use href="#hash" /></svg>
          </li>
        </ol>
        <button class="settings" aria-label="設定"><svg><use href="#gear" /></svg></button>
      </div>
    </footer>
  </div>
</template>

<style>
body { margin: 0; background: #fff; }
</style>

<style scoped>
.defs { position: absolute; }
.app {
  display: flex;
  flex-direction: column;
  min-height: 100vh;
  background: #fff;
  color: #444;
  font-family: "Liberation Sans", "Noto Sans CJK JP", sans-serif;
  font-size: 6px;
  line-height: 8px;
  font-feature-settings: "palt";
}
.app *, .app { box-sizing: border-box; }
button, input, select { font: inherit; color: inherit; margin: 0; padding: 0; border: 0; background: none; border-radius: 0; font-feature-settings: inherit; }
button { display: inline-flex; align-items: center; justify-content: center; white-space: nowrap; }
svg { display: block; flex: none; }
.caret { flex: none; border: 2px solid transparent; border-top: 3px solid #333; border-bottom: 0; }
ul, ol { list-style: none; margin: 0; padding: 0; }

.titlebar { display: flex; align-items: center; height: 12px; padding: 0 4px 0 2px; gap: 3px; color: #222; }
.logo { width: 8px; height: 9px; }
.window-buttons { margin-left: auto; display: flex; gap: 16px; padding-right: 3px; }
.window-buttons svg { width: 8px; height: 8px; }

.docbar { display: flex; height: 17px; background: #c9c9c9; border-top: 1px solid #bdbdbd; }
.quick { flex: none; display: flex; align-items: center; width: 101px; padding-left: 4px; gap: 8px; }
.quick svg, .home svg { width: 8px; height: 8px; }
.quick .wide { gap: 3px; }
.quick .caret { border-top-color: #666; }
.pale { opacity: .7; }
.home { width: 21px; background: #b8b8b8; padding-top: 2px; }
.doc-tab { flex: 1; display: flex; align-items: center; background: #f1f1f1; padding-right: 2px; margin-top: 1px; }
.doc-title { flex: 1; display: flex; align-items: center; justify-content: center; gap: 3px; }
.doc-title svg, .doc-tab button svg { width: 8px; height: 8px; }
.new-tab { width: 16px; background: #bababa; }
.new-tab svg { width: 8px; height: 8px; }
.account { display: flex; align-items: center; gap: 8px; padding: 0 8px 0 7px; }
.account svg { width: 9px; height: 9px; }
.account .avatar { width: 12px; height: 12px; }
.help { width: 9px; height: 9px; border-radius: 50%; background: #666; color: #eee; font-weight: bold; }

.ribbon { display: flex; height: 43px; background: #f1f1f1; border-bottom: 1px solid #e2e2e2; padding-left: 6px; }
.workspace { flex: none; align-self: center; width: 57px; height: 32px; gap: 3px; border: 1px solid #d8d8d8; border-radius: 2px; color: #222; }
.tabs { display: flex; height: 12px; padding-left: 5px; gap: 6px; }
.tabs button { padding: 2px 6px 0; border-bottom: 2px solid transparent; }
.tabs .active { color: #1a9bd7; border-color: #1a9bd7; font-weight: bold; padding: 2px 4px 0; }
.ribbon-body { padding-left: 4px; }
.groups { display: flex; padding-top: 1px; }
.group { display: flex; flex-direction: column; align-items: center; padding: 0 4px 0 3px; border-right: 1px solid #dcdcdc; height: 28px; }
.group:last-child { border-color: transparent; }
.tools { display: flex; }
.tools button { width: 22px; height: 20px; }
.tools svg { width: 18px; height: 18px; }
.group-label { gap: 2px; height: 9px; }

.stage { flex: 1; display: grid; grid-template: 1fr auto / 158px 1fr 132px; }
.model { grid-area: 1 / 1 / 3 / 4; width: 100%; height: 100%; }
.browser { grid-area: 1 / 1; padding: 3px 0 0 2px; }
.panel-head { display: flex; align-items: center; height: 13px; padding: 0 5px 0 3px; background: #f1f1f1; border: 1px solid #dedede; gap: 5px; }
.rewind, .ff { font-size: 4px; color: #222; }
.dotbtn { margin-left: auto; width: 5px; height: 5px; border-radius: 50%; background: #222; color: #fff; line-height: 5px; }
.tree { display: grid; grid-auto-rows: 12px 13px; padding-top: 2px; }
.row { display: flex; align-items: center; white-space: nowrap; padding-left: 18px; color: #333; }
.row.root { padding-left: 8px; }
.row.d2 { padding-left: 38px; }
.twist { width: 10px; justify-content: flex-start; }
.twist::before { content: ""; width: 5px; height: 7px; margin-left: 1px; background: #555; clip-path: polygon(0 0, 100% 50%, 0 100%, 0 0, 20% 20%, 20% 80%, 75% 50%, 20% 20%); }
.twist.open::before { width: 7px; height: 7px; margin-left: 0; background: #333; clip-path: polygon(100% 0, 100% 100%, 0 100%); }
.box { display: flex; align-items: center; height: 11px; background: #f2f2f2; }
.box.plain { width: 14px; background: none; }
.eye { width: 12px; height: 6px; }
.name { display: flex; align-items: center; height: 11px; padding-right: 5px; }
.ic { width: 14px; height: 10px; }
.lk { width: 12px; height: 9px; }
.txt { padding-left: 4px; }
.selected { background: #0a94dc; color: #fff; }
.dotted { border-bottom: 1px dotted #5a7fb0; }
.root-name { background: #8f8f8f; color: #fff; padding-right: 4px; height: 9px; gap: 3px; }
.badge { width: 10px; height: 10px; margin-left: 1px; }

.right { grid-area: 1 / 3; padding-right: 2px; padding-top: 10px; }
.viewcube { width: 54px; height: 48px; margin-left: 73px; margin-bottom: 7px; overflow: visible; }
.axz { font-size: 8px; fill: #7a7af0; }
.axx { font-size: 7px; fill: #f07070; }
.face-r { font-size: 16px; fill: #777; }
.face-f { font-size: 7px; fill: #999; }
.dialog { background: #f3f3f3; border: 1px solid #d6d6d6; color: #333; }
.dialog header { display: flex; align-items: center; gap: 2px; height: 12px; padding: 0 3px 0 5px; border-bottom: 1px solid #dcdcdc; }
.dialog header svg { width: 5px; height: 5px; }
.ff { margin-left: auto; }
.fields { display: grid; grid-template-columns: 34px 72px; row-gap: 2px; padding: 1px 6px 3px; align-items: center; white-space: nowrap; }
.sel { display: flex; align-items: center; gap: 6px; }
.pick { width: 41px; height: 14px; gap: 3px; background: #0a94dc; color: #fff; }
.pick svg { width: 6px; height: 8px; }
.clear svg { width: 6px; height: 6px; }
.drop { display: flex; align-items: center; gap: 3px; height: 13px; padding: 0 2px; background: #fff; border: 1px solid #d8d8d8; }
.drop svg { width: 8px; height: 7px; }
.drop select { flex: 1; min-width: 0; appearance: none; outline: 0; }
.fields input[type="text"] { width: 72px; height: 13px; padding: 0 2px; background: #fff; border: 1px solid #d8d8d8; }
.fields input[type="checkbox"] { appearance: none; width: 7px; height: 7px; margin: 4px 3px; border: 1px solid #666; border-radius: 1px; background: #eee; }
.fields input[type="checkbox"]:checked { background: #0a94dc; }
.dialog footer { display: flex; align-items: center; gap: 5px; height: 17px; padding: 0 5px 0 4px; border-top: 1px solid #d0d0d0; }
.dialog footer svg { width: 7px; height: 7px; margin-right: auto; }
.dialog footer button { width: 31px; height: 11px; background: #ececec; border: 1px solid #c4c4c4; }

.bottom { grid-area: 2 / 1 / 3 / 4; display: grid; grid-template-columns: 1fr auto 1fr; align-items: center; padding: 0 8px 2px 2px; }
.comment { width: 156px; padding-left: 12px; color: #666; }
.navbar { display: flex; align-items: center; height: 13px; margin-left: 6px; padding: 0 2px; background: #f1f1f1; }
.navbar button { width: 13px; height: 13px; }
.navbar .wide { width: 17px; gap: 1px; }
.navbar svg { width: 10px; height: 10px; }
.sep { width: 1px; height: 11px; margin: 0 2px; background: #ccc; }
.status { justify-self: end; color: #222; }

.timeline { height: 26px; background: #f1f1f1; border-top: 1px solid #e0e0e0; }
.scroll { width: 32%; height: 2px; margin-left: 2px; background: #c0c0c0; }
.track { display: flex; align-items: center; }
.play { display: flex; width: 72px; padding: 4px 0 0 3px; gap: 1px; }
.play button { width: 12px; }
.play svg { width: 9px; height: 9px; }
.steps { flex: 1; display: grid; grid-auto-flow: column; grid-auto-columns: 1fr; height: 22px; margin-left: 2px; }
.steps li { display: flex; flex-direction: column; align-items: center; padding-top: 3px; position: relative; }
.step { width: 10px; height: 12px; }
.steps li::after { content: ""; width: 100%; height: 1px; background: #bbb; margin-top: 3px; }
.steps li::before { content: ""; position: absolute; top: 15px; width: 1px; height: 3px; background: #bbb; }
.hot .step { width: 12px; background: #e9e42c; }
.later .step { opacity: .3; }
.hash { position: absolute; top: 0; width: 9px; height: 3px; }
.steps .marker::before { top: 2px; left: 100%; width: 5px; height: 17px; background: #333; clip-path: polygon(0 0, 100% 0, 100% 15%, 60% 30%, 60% 100%, 40% 100%, 40% 30%, 0 15%); }
.settings { width: 26px; padding-top: 4px; }
.settings svg { width: 10px; height: 10px; }
</style>
